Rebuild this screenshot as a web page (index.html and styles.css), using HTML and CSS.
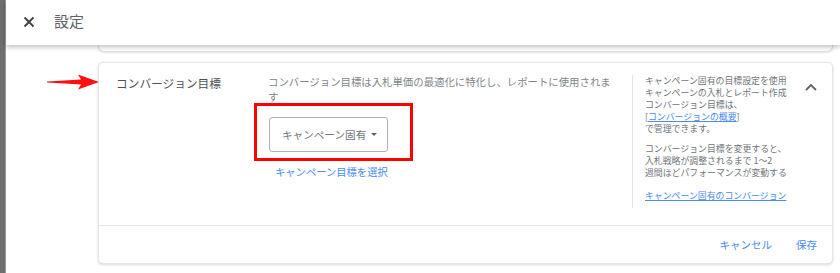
FILE: index.html
```html
<!DOCTYPE html>
<html lang="ja">
<head>
  <meta charset="UTF-8" />
  <meta name="viewport" content="width=device-width, initial-scale=1.0"/>
  <title>設定</title>
  <link rel="stylesheet" href="styles.css">
</head>
<body>

  <div class="edge"></div>

  <div class="page">
    <header class="topbar">
      <svg class="close-icon" width="12" height="12" viewBox="0 0 12 12">
        <path d="M1.5 1.5 L10.5 10.5 M10.5 1.5 L1.5 10.5" stroke="#3c4043" stroke-width="1.8" fill="none"/>
      </svg>
      <span class="topbar-title">設定</span>
    </header>

    <div class="prev-card"></div>

    <section class="card">
      <div class="card-body">
        <div class="setting-name">コンバージョン目標</div>

        <div class="setting-main">
          <p class="setting-desc">コンバージョン目標は入札単価の最適化に特化し、レポートに使用されます</p>
          <div class="select-wrap">
            <button class="select-box">キャンペーン固有<span class="caret"></span></button>
            <div class="highlight"></div>
          </div>
          <a class="text-link choose-link" href="#">キャンペーン目標を選択</a>
        </div>

        <aside class="setting-help">
          <div class="help-text">
            <p>キャンペーン固有の目標設定を使用<br>キャンペーンの入札とレポート作成<br>コンバージョン目標は、<br>[<a class="text-link underline" href="#">コンバージョンの概要</a>]<br>で管理できます。</p>
            <p>コンバージョン目標を変更すると、<br>入札戦略が調整されるまで 1〜2<br>週間ほどパフォーマンスが変動する</p>
            <p><a class="text-link underline" href="#">キャンペーン固有のコンバージョン</a></p>
          </div>
          <svg class="chevron" width="16" height="10" viewBox="0 0 16 10">
            <path d="M3 8 L8 3 L13 8" stroke="#5f6368" stroke-width="1.8" fill="none"/>
          </svg>
        </aside>
      </div>

      <div class="card-actions">
        <button class="flat-btn">キャンセル</button>
        <button class="flat-btn">保存</button>
      </div>
    </section>
  </div>

  <!-- annotation arrow -->
  <svg class="pointer-arrow" width="54" height="16" viewBox="0 0 54 16">
    <polygon points="0,7.6 34,5.5 31,0.5 52,8 31,15.5 34,10.5 0,8.4" fill="#ff1010"/>
  </svg>

</body>
</html>
```

FILE: styles.css
```css
/* Reset + Font */
body {
  margin: 0;
  display: flex;
  min-height: 273px;
  font-family: 'Noto Sans CJK JP', 'Noto Sans', sans-serif;
  background: #ffffff;
  color: #5f6368;
  overflow: hidden;
}

.edge {
  width: 5px;
  background: #6e6e6e;
  border-right: 1px solid #9a9a9a;
  flex-shrink: 0;
}

.page {
  flex: 1;
  background: #ffffff;
}

/* Header */
.topbar {
  position: relative;
  z-index: 2;
  height: 45px;
  display: flex;
  align-items: center;
  padding: 0 0 3px 17px;
  background: #ffffff;
  box-shadow: 0 2px 5px rgba(0, 0, 0, 0.25);
  box-sizing: border-box;
}

.close-icon {
  margin-top: 1px;
}

.topbar-title {
  margin-left: 19px;
  font-size: 15px;
  color: #5f6368;
  line-height: 20px;
}

.prev-card {
  height: 6px;
  margin: 0 7px 0 92px;
  border: 1px solid #e0e0e0;
  border-top: none;
  border-radius: 0 0 6px 6px;
  box-shadow: 0 1px 2px rgba(0, 0, 0, 0.12);
}

/* Card */
.card {
  margin: 10px 7px 0 92px;
  border: 1px solid #e6e6e6;
  border-radius: 5px;
  box-shadow: 0 1px 3px rgba(0, 0, 0, 0.16);
  background: #ffffff;
}

.card-body {
  display: flex;
  height: 162px;
}

.setting-name {
  width: 152px;
  padding: 12px 0 0 17px;
  font-size: 11.7px;
  line-height: 16px;
  color: #4d5156;
}

.setting-main {
  width: 364px;
  padding-top: 11px;
}

.setting-desc {
  margin: 0;
  width: 350px;
  font-size: 10.4px;
  line-height: 15px;
  color: #80868b;
}

.select-wrap {
  position: relative;
  margin: 13px 0 0 1px;
  width: 119px;
  height: 35px;
}

.select-box {
  width: 119px;
  height: 35px;
  box-sizing: border-box;
  border: 1px solid #b0b4b8;
  border-radius: 3px;
  background: #ffffff;
  font-family: inherit;
  font-size: 10.6px;
  color: #70757a;
  padding: 0 0 0 12px;
  display: flex;
  align-items: center;
  text-align: left;
}

.caret {
  margin-left: 5px;
  width: 0;
  height: 0;
  border-left: 3.5px solid transparent;
  border-right: 3.5px solid transparent;
  border-top: 3.5px solid #5f6368;
}

.highlight {
  position: absolute;
  left: -15px;
  top: -14px;
  width: 159px;
  height: 58px;
  box-sizing: border-box;
  border: 3px solid #ff0000;
}

.text-link {
  color: #4a8af4;
  text-decoration: none;
}

.underline {
  text-decoration: underline;
}

.choose-link {
  display: block;
  margin: 13px 0 0 7px;
  font-size: 10.3px;
  line-height: 14px;
}

/* Help column */
.setting-help {
  flex: 1;
  display: flex;
  margin-top: 12px;
  height: 133px;
  border-left: 1px solid #e3e3e3;
  padding-left: 12px;
}

.help-text {
  width: 150px;
  font-size: 8.9px;
  line-height: 12px;
  color: #70757a;
}

.help-text p {
  margin: 0 0 8px;
}

.help-text p:last-child {
  margin-top: 11px;
}

.chevron {
  margin: 7px 0 0 8px;
}

/* Footer */
.card-actions {
  height: 37px;
  border-top: 1px solid #e6e6e6;
  display: flex;
  justify-content: flex-end;
  align-items: center;
  padding-right: 15px;
  gap: 24px;
}

.flat-btn {
  border: none;
  background: none;
  padding: 0;
  font-family: inherit;
  font-size: 10.5px;
  color: #4a8af4;
  cursor: pointer;
}

.pointer-arrow {
  position: absolute;
  left: 47px;
  top: 74px;
}
```
